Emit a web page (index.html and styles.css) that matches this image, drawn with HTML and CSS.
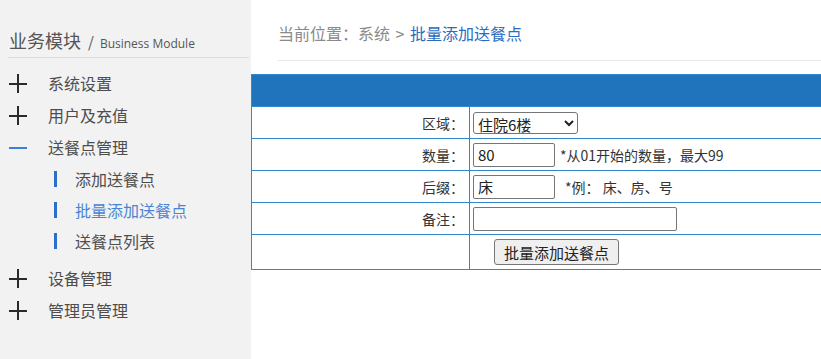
FILE: index.html
```html
<!DOCTYPE html>
<html lang="zh">
<head>
<meta charset="utf-8">
<title>批量添加送餐点</title>
<link rel="stylesheet" href="styles.css">
</head>
<body>
<div class="page">
  <aside class="sidebar">
    <div class="side-title">业务模块<span class="slash">/</span><span class="side-sub">Business Module</span></div>
    <ul class="menu">
      <li class="menu-item"><span class="ico plus"></span><span class="menu-text">系统设置</span></li>
      <li class="menu-item"><span class="ico plus"></span><span class="menu-text">用户及充值</span></li>
      <li class="menu-item"><span class="ico minus"></span><span class="menu-text">送餐点管理</span></li>
      <li class="sub-item"><span class="bar"></span><span>添加送餐点</span></li>
      <li class="sub-item active"><span class="bar"></span><span>批量添加送餐点</span></li>
      <li class="sub-item"><span class="bar"></span><span>送餐点列表</span></li>
      <li class="menu-item gap"><span class="ico plus"></span><span class="menu-text">设备管理</span></li>
      <li class="menu-item"><span class="ico plus"></span><span class="menu-text">管理员管理</span></li>
    </ul>
  </aside>
  <main class="main">
    <div class="crumb">当前位置：系统 <span class="gt">&gt;</span> <span class="crumb-cur">批量添加送餐点</span></div>
    <table class="form-table">
      <tr class="head"><td colspan="2"></td></tr>
      <tr>
        <td class="lbl">区域：</td>
        <td class="val"><select class="sel"><option>住院6楼</option></select></td>
      </tr>
      <tr>
        <td class="lbl">数量：</td>
        <td class="val"><input class="inp" type="text" value="80"><span class="hint">*从01开始的数量，最大99</span></td>
      </tr>
      <tr>
        <td class="lbl">后缀：</td>
        <td class="val"><input class="inp" type="text" value="床"><span class="hint hint2">*例：&nbsp;床、房、号</span></td>
      </tr>
      <tr>
        <td class="lbl">备注：</td>
        <td class="val"><input class="inp wide" type="text" value=""></td>
      </tr>
      <tr class="last">
        <td class="lbl"></td>
        <td class="val"><button class="btn" type="button">批量添加送餐点</button></td>
      </tr>
    </table>
  </main>
</div>
</body>
</html>
```

FILE: styles.css
```css
html, body {
  margin: 0;
  padding: 0;
  background: #fff;
  font-family: "Noto Sans CJK SC", "Noto Sans", sans-serif;
  color: #333;
}
.page {
  display: flex;
  width: 821px;
  height: 359px;
  overflow: hidden;
}
.sidebar {
  width: 251px;
  flex: none;
  background: #f2f2f2;
  box-sizing: border-box;
  padding: 0 2px 0 8px;
}
.side-title {
  padding: 28px 0 0 1px;
  height: 24px;
  line-height: 24px;
  font-size: 18px;
  color: #555;
  border-bottom: 1px solid #dcdcdc;
  padding-bottom: 5px;
  white-space: nowrap;
}
.slash {
  font-size: 15px;
  margin: 0 6px 0 7px;
  color: #555;
}
.side-sub {
  font-family: "Open Sans", "Noto Sans", sans-serif;
  font-size: 12px;
  color: #555;
}
.menu {
  list-style: none;
  margin: 9px 0 0;
  padding: 0;
}
.menu-item {
  display: flex;
  align-items: center;
  height: 32px;
  font-size: 16px;
  color: #4d4d4d;
}
.menu-item.gap {
  margin-top: 6px;
}
.ico {
  position: relative;
  width: 18px;
  height: 19px;
  margin-left: 1px;
  margin-right: 21px;
  flex: none;
}
.ico::before,
.ico::after {
  content: "";
  position: absolute;
  background: #2a2a2a;
}
.ico::before {
  left: 0;
  top: 9px;
  width: 18px;
  height: 2px;
}
.plus::after {
  left: 8px;
  top: 0;
  width: 2px;
  height: 19px;
}
.minus::before {
  background: #3d7fd6;
}
.minus::after {
  display: none;
}
.sub-item {
  display: flex;
  align-items: center;
  height: 31px;
  font-size: 16px;
  color: #4d4d4d;
}
.sub-item .bar {
  width: 3px;
  height: 16px;
  background: #2d6fc8;
  margin-left: 46px;
  margin-right: 18px;
}
.sub-item.active {
  color: #4a84d4;
}
.main {
  flex: 1;
  min-width: 0;
  overflow: hidden;
}
.crumb {
  margin-left: 27px;
  padding-top: 21px;
  height: 24px;
  line-height: 24px;
  padding-bottom: 15px;
  border-bottom: 1px solid #e8e8e8;
  margin-bottom: 13px;
  font-size: 16px;
  color: #8a8a8a;
  white-space: nowrap;
}
.gt {
  margin: 0 2px;
}
.crumb-cur {
  color: #2b6cc0;
}
.form-table {
  width: calc(100% + 4px);
  border-collapse: collapse;
  font-size: 14px;
}
.form-table td {
  border: 1px solid #2e89d0;
  padding: 0;
  height: 31px;
}
.form-table tr.head td {
  background: #1f74bb;
  height: 31px;
}
.form-table tr.last td {
  height: 34px;
}
.lbl {
  width: 212px;
  text-align: right;
  padding-right: 5px !important;
  color: #333;
}
.val {
  padding-left: 3px !important;
  white-space: nowrap;
}
.sel {
  width: 105px;
  height: 22px;
  font-family: "Noto Sans CJK SC", sans-serif;
  font-size: 15px;
  color: #222;
  border: 1px solid #767676;
  border-radius: 3px;
  background: #fff;
  vertical-align: middle;
}
.inp {
  box-sizing: border-box;
  width: 82px;
  height: 24px;
  padding: 0 4px;
  font-family: "Noto Sans CJK SC", sans-serif;
  font-size: 15px;
  color: #222;
  border: 1px solid #767676;
  border-radius: 2px;
  vertical-align: middle;
}
.inp.wide {
  width: 204px;
}
.hint {
  margin-left: 5px;
  font-size: 14px;
  color: #333;
  vertical-align: middle;
}
.hint2 {
  margin-left: 10px;
}
.btn {
  margin-left: 21px;
  width: 125px;
  height: 26px;
  font-family: "Noto Sans CJK SC", sans-serif;
  font-size: 15px;
  color: #222;
  background: #efefef;
  border: 1px solid #767676;
  border-radius: 3px;
  padding: 0;
  vertical-align: middle;
}
```
